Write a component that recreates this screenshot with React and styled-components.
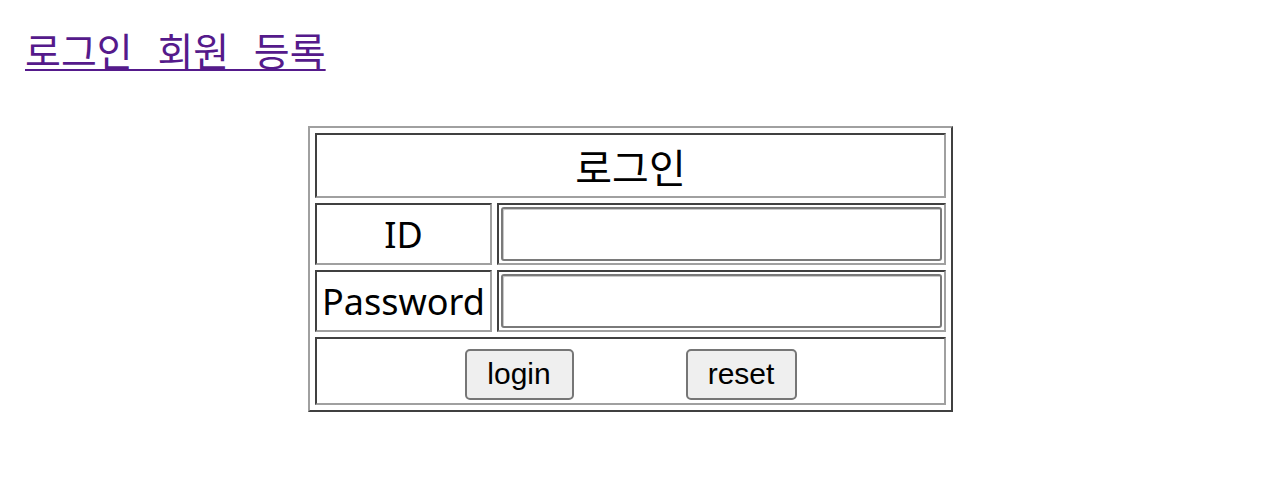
import React from "react";
import styled, { createGlobalStyle } from "styled-components";

const GlobalStyle = createGlobalStyle`
  html, body {
    margin: 0;
    padding: 0;
    background: #ffffff;
  }
  body {
    font-family: "Noto Sans", "Noto Sans CJK KR", sans-serif;
    color: #000000;
  }
`;

const Page = styled.div`
  padding: 23px 0 0 25px;
`;

const NavLink = styled.a`
  display: inline-block;
  font-family: "Noto Sans CJK KR", sans-serif;
  font-size: 39px;
  line-height: 52px;
  color: #551a8b;
  text-decoration: underline;
  text-decoration-thickness: 2px;
  text-underline-offset: 3px;
  word-spacing: 16px;
`;

const LoginTable = styled.table`
  margin: 51px 0 0 283px;
  width: 645px;
  border-collapse: separate;
  border-spacing: 5px;
  border: 2px solid;
  border-color: #a0a0a0 #404040 #404040 #a0a0a0;
  font-size: 36px;
`;

const Cell = styled.td`
  border: 2px solid;
  border-color: #404040 #a0a0a0 #a0a0a0 #404040;
  text-align: center;
  vertical-align: middle;
  padding: ${(p) => p.$pad || "0"};
  height: ${(p) => p.$h}px;
  box-sizing: border-box;
  white-space: nowrap;
`;

const Title = styled.span`
  font-family: "Noto Sans CJK KR", sans-serif;
  font-size: 40px;
`;

const TextInput = styled.input`
  display: block;
  width: 100%;
  height: 54px;
  box-sizing: border-box;
  border: 2px solid #7a7a7a;
  border-radius: 3px;
  box-shadow: inset 1px 1px 0 #c8c8c8;
  background: #ffffff;
  font-size: 30px;
  padding: 0 4px;
  outline: none;
`;

const ButtonRow = styled.div`
  display: flex;
  justify-content: center;
  gap: 112px;
  padding-top: 6px;
`;

const Button = styled.button`
  width: ${(p) => p.$w}px;
  height: 51px;
  box-sizing: border-box;
  background: #efefef;
  border: 2px solid #767676;
  border-radius: 5px;
  font-family: "Liberation Sans", Arial, sans-serif;
  font-size: 30px;
  color: #000000;
  padding: 0;
`;

export default function App() {
  return (
    <>
      <GlobalStyle />
      <Page>
        <NavLink href="#">로그인 회원 등록</NavLink>
        <form onSubmit={(e) => e.preventDefault()}>
          <LoginTable>
            <tbody>
              <tr>
                <Cell colSpan={2} $h={65}>
                  <Title>로그인</Title>
                </Cell>
              </tr>
              <tr>
                <Cell $h={62} style={{ width: 177 }}>ID</Cell>
                <Cell $h={62} $pad="2px">
                  <TextInput type="text" name="id" />
                </Cell>
              </tr>
              <tr>
                <Cell $h={62}>Password</Cell>
                <Cell $h={62} $pad="2px">
                  <TextInput type="password" name="pw" />
                </Cell>
              </tr>
              <tr>
                <Cell colSpan={2} $h={68}>
                  <ButtonRow>
                    <Button type="submit" $w={109}>login</Button>
                    <Button type="reset" $w={111}>reset</Button>
                  </ButtonRow>
                </Cell>
              </tr>
            </tbody>
          </LoginTable>
        </form>
      </Page>
    </>
  );
}
